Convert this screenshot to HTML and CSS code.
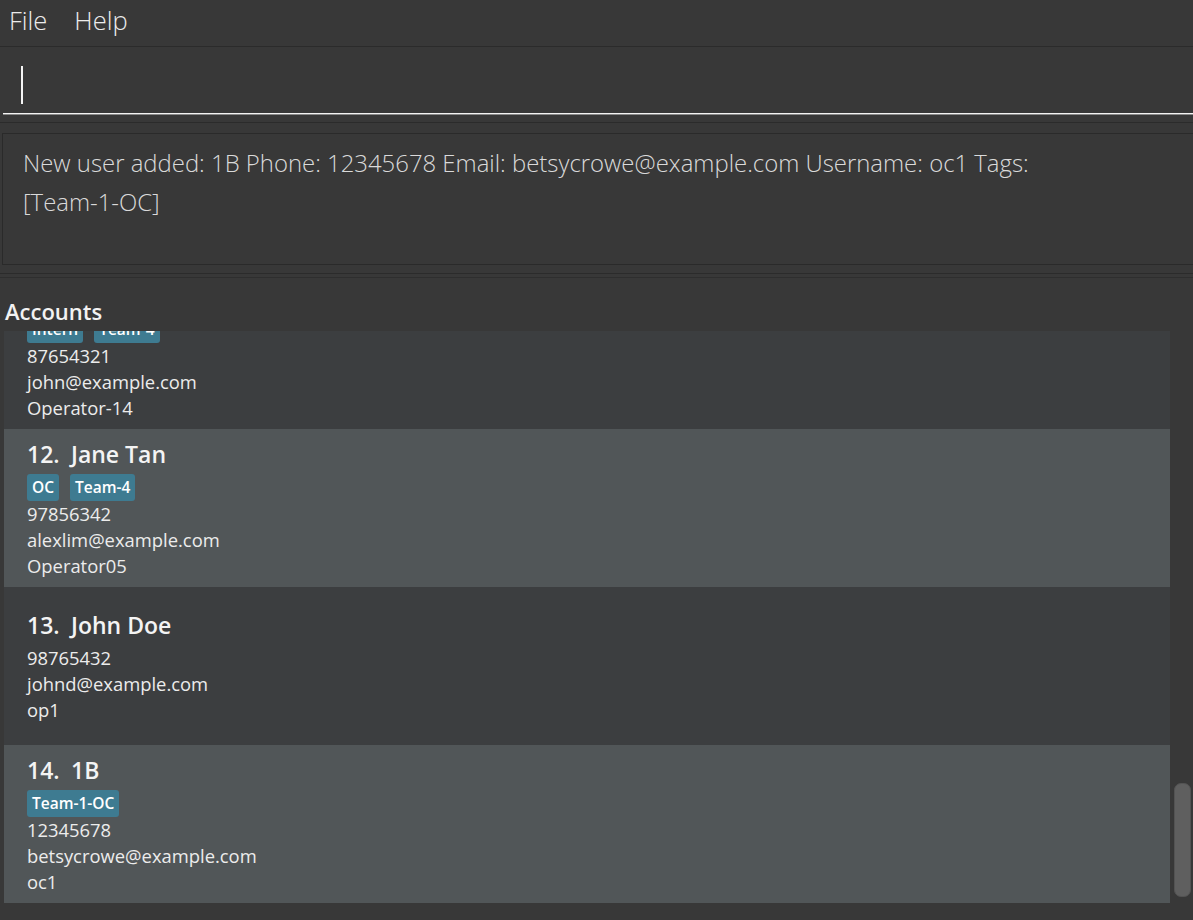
FILE: index.html
```html
<!DOCTYPE html>
<html lang="en">
<head>
<meta charset="utf-8">
<title>Accounts</title>
<link rel="stylesheet" href="styles.css">
</head>
<body>
  <div class="menubar">
    <span class="menu-item">File</span>
    <span class="menu-item">Help</span>
  </div>

  <div class="command-pane">
    <div class="command-box">
      <span class="caret"></span>
    </div>
  </div>

  <div class="result-pane">
    <div class="result-box">
      <p class="result-text">New user added: 1B Phone: 12345678 Email: betsycrowe@example.com Username: oc1 Tags: [Team-1-OC]</p>
    </div>
  </div>

  <div class="list-pane">
    <div class="list-title">Accounts</div>
    <div class="list-view">
      <div class="cards">
        <div class="card card-dark">
          <div class="card-name"><span class="card-id">11.</span><span>Alex Tan</span></div>
          <div class="tags"><span class="tag">Intern</span><span class="tag">Team-4</span></div>
          <div class="card-detail">87654321</div>
          <div class="card-detail">john@example.com</div>
          <div class="card-detail">Operator-14</div>
        </div>
        <div class="card card-light">
          <div class="card-name"><span class="card-id">12.</span><span>Jane Tan</span></div>
          <div class="tags"><span class="tag">OC</span><span class="tag">Team-4</span></div>
          <div class="card-detail">97856342</div>
          <div class="card-detail">alexlim@example.com</div>
          <div class="card-detail">Operator05</div>
        </div>
        <div class="card card-dark">
          <div class="card-name"><span class="card-id">13.</span><span>John Doe</span></div>
          <div class="card-detail">98765432</div>
          <div class="card-detail">johnd@example.com</div>
          <div class="card-detail">op1</div>
        </div>
        <div class="card card-light">
          <div class="card-name"><span class="card-id">14.</span><span>1B</span></div>
          <div class="tags"><span class="tag">Team-1-OC</span></div>
          <div class="card-detail">12345678</div>
          <div class="card-detail">betsycrowe@example.com</div>
          <div class="card-detail">oc1</div>
        </div>
      </div>
      <div class="scrollbar">
        <div class="thumb"></div>
      </div>
    </div>
  </div>
</body>
</html>
```

FILE: styles.css
```css
* {
  box-sizing: border-box;
}

html, body {
  margin: 0;
  padding: 0;
}

body {
  width: 1193px;
  height: 920px;
  overflow: hidden;
  background: #383838;
  color: #f0f0f0;
  font-family: "Open Sans", "Noto Sans", "DejaVu Sans", sans-serif;
  display: flex;
  flex-direction: column;
}

/* Menu bar */
.menubar {
  height: 47px;
  flex-shrink: 0;
  display: flex;
  align-items: flex-start;
  gap: 27px;
  padding: 0 0 0 9px;
  border-bottom: 1px solid #2b2b2b;
}

.menu-item {
  font-size: 25.5px;
  font-weight: 300;
  line-height: 40px;
  color: #ececec;
}

/* Command box */
.command-pane {
  height: 76px;
  flex-shrink: 0;
  padding: 0 0 0 3px;
  border-bottom: 1px solid #2b2b2b;
}

.command-box {
  height: 67px;
  border-bottom: 1px solid #f4f4f4;
  box-shadow: 0 1px 0 #8a8a8a;
  padding: 19px 0 0 18px;
}

.caret {
  display: block;
  width: 2px;
  height: 38px;
  background: #f4f4f4;
}

/* Result display */
.result-pane {
  height: 151px;
  flex-shrink: 0;
  padding: 10px 0 0 2px;
  border-bottom: 1px solid #2b2b2b;
}

.result-box {
  height: 132px;
  border: 1px solid #2a2a2a;
  border-right: none;
  padding: 9px 90px 0 20px;
}

.result-text {
  margin: 0;
  font-size: 23.9px;
  font-weight: 300;
  line-height: 39px;
  color: #dadada;
}

/* Account list */
.list-pane {
  flex: 1;
  margin-top: 3px;
  border-top: 1px solid #2e2e2e;
  display: flex;
  flex-direction: column;
}

.list-title {
  padding: 18px 0 5px 5px;
  font-size: 22px;
  font-weight: 600;
  line-height: 30px;
  color: #f2f2f2;
}

.list-view {
  height: 572px;
  margin-left: 4px;
  display: flex;
}

.cards {
  width: 1166px;
  height: 100%;
  overflow: hidden;
  display: flex;
  flex-direction: column;
  justify-content: flex-end;
}

.card {
  height: 158px;
  flex-shrink: 0;
  padding: 0 0 0 23px;
  display: flex;
  flex-direction: column;
  justify-content: center;
}

.card-dark {
  background: #3c3e40;
}

.card-light {
  background: #515658;
}

.card-name {
  display: flex;
  font-size: 23px;
  font-weight: 600;
  line-height: 30px;
  color: #f4f4f4;
  margin: 1px 0 5px;
}

.card-id {
  width: 44px;
}

.tags {
  display: flex;
  gap: 11px;
  height: 27px;
}

.tag {
  background: #3e7b91;
  color: #ffffff;
  font-size: 15.5px;
  font-weight: 600;
  line-height: 27px;
  padding: 0 5px;
  border-radius: 3px;
}

.card-detail {
  font-size: 18.4px;
  line-height: 26px;
  color: #ececec;
}

.scrollbar {
  width: 23px;
  display: flex;
  flex-direction: column;
  justify-content: flex-end;
  padding: 0 2px 6px 4px;
}

.thumb {
  height: 114px;
  background: #5f5f5f;
  border: 1px solid #535353;
  border-radius: 7px;
}
```
